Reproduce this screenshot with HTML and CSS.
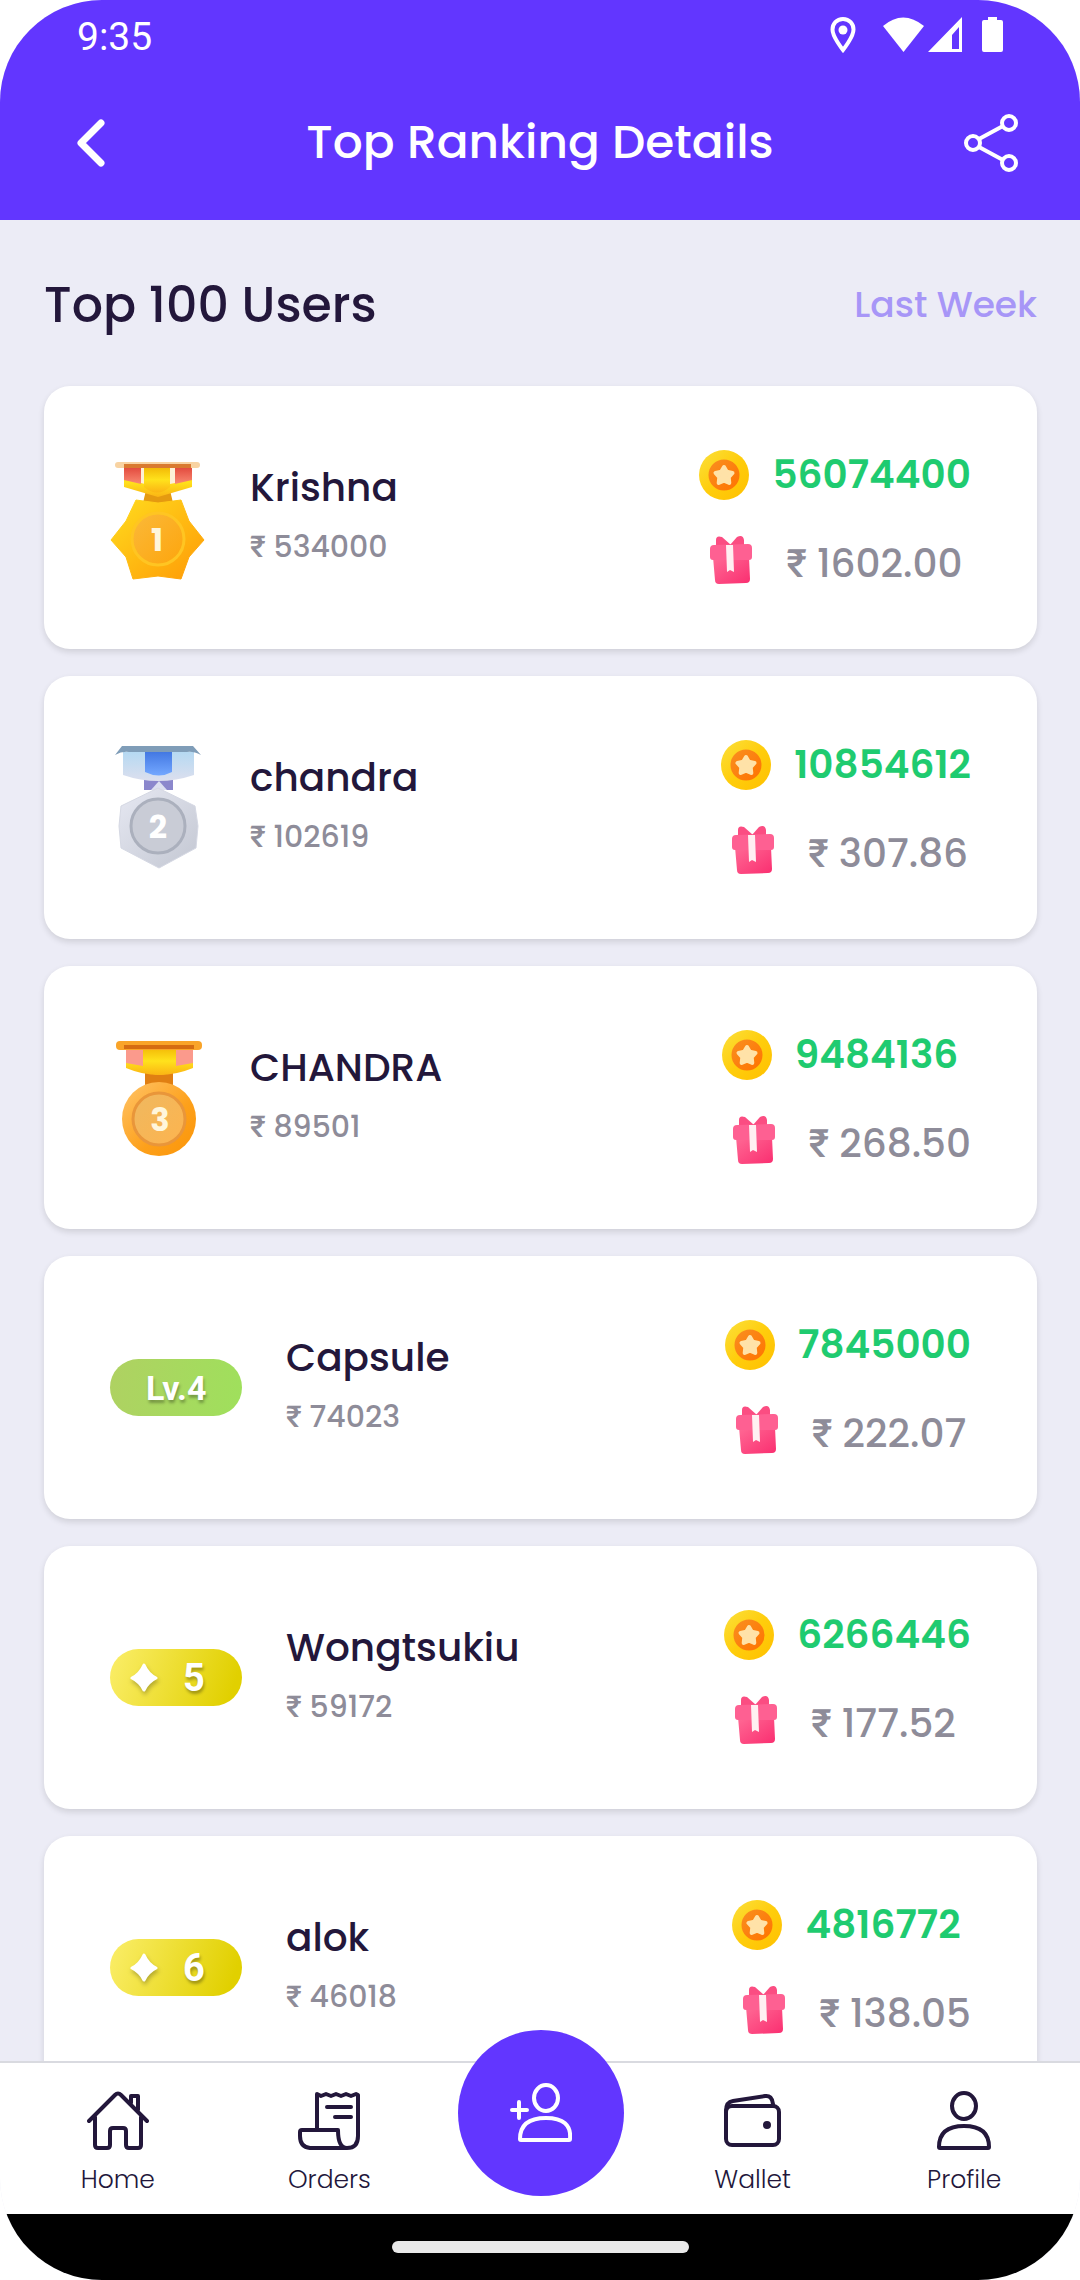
FILE: index.html
```html
<!DOCTYPE html>
<html lang="en">
<head>
<meta charset="utf-8">
<meta name="viewport" content="width=device-width, initial-scale=1">
<title>Top Ranking Details</title>
<link rel="stylesheet" href="styles.css">
</head>
<body>
<svg class="sprite" aria-hidden="true">
  <defs>
    <linearGradient id="gold" x1="0" y1="0" x2="1" y2="1"><stop offset="0" stop-color="#ffdc1e"/><stop offset="1" stop-color="#ff9a06"/></linearGradient>
    <linearGradient id="goldDisc" x1="0" y1="0" x2="1" y2="1"><stop offset="0" stop-color="#fbb93a"/><stop offset="1" stop-color="#fda50c"/></linearGradient>
    <linearGradient id="redRibbon" x1="0" y1="0" x2="0" y2="1"><stop offset="0" stop-color="#e2483c"/><stop offset="1" stop-color="#f98a72"/></linearGradient>
    <linearGradient id="yellowRibbon" x1="0" y1="0" x2="0" y2="1"><stop offset="0" stop-color="#f2b705"/><stop offset=".5" stop-color="#ffe21c"/><stop offset="1" stop-color="#fbb414"/></linearGradient>
    <linearGradient id="silver" x1="0" y1="0" x2="1" y2="1"><stop offset="0" stop-color="#e6e8f2"/><stop offset="1" stop-color="#c3c7d2"/></linearGradient>
    <linearGradient id="blueRibbon" x1="0" y1="0" x2="0" y2="1"><stop offset="0" stop-color="#3f74e0"/><stop offset="1" stop-color="#74a8ff"/></linearGradient>
    <linearGradient id="paleRibbon" x1="0" y1="0" x2="0" y2="1"><stop offset="0" stop-color="#b5d9f2"/><stop offset="1" stop-color="#dcdfee"/></linearGradient>
    <linearGradient id="bronze" x1="0" y1="0" x2="1" y2="1"><stop offset="0" stop-color="#ffc469"/><stop offset=".6" stop-color="#fda01a"/><stop offset="1" stop-color="#fb9508"/></linearGradient>
    <linearGradient id="bronzeDisc" x1="0" y1="0" x2="1" y2="1"><stop offset="0" stop-color="#efb860"/><stop offset="1" stop-color="#fdb44e"/></linearGradient>
    <linearGradient id="coinRim" x1="0" y1="0" x2="1" y2="1"><stop offset="0" stop-color="#fbe03c"/><stop offset=".5" stop-color="#ffcd0c"/><stop offset="1" stop-color="#ffc000"/></linearGradient>
    <linearGradient id="coinCore" x1="0" y1="0" x2="1" y2="1"><stop offset="0" stop-color="#f98f20"/><stop offset="1" stop-color="#ff7300"/></linearGradient>
    <linearGradient id="giftBox" x1="0" y1="0" x2="1" y2="1"><stop offset="0" stop-color="#ff6a95"/><stop offset="1" stop-color="#fa2e70"/></linearGradient>
  </defs>

  <symbol id="coin" viewBox="0 0 50 50">
    <circle cx="25" cy="25" r="25" fill="url(#coinRim)"/>
    <circle cx="25" cy="25" r="15.500" fill="url(#coinCore)"/>
    <path d="M25 17l2.800 4.800 5.700 1.200-3.800 4.300.6 5.700-5.300-2.300-5.300 2.300.6-5.700-3.800-4.300 5.700-1.200z" fill="#ffe2a8" stroke="#ffe2a8" stroke-width="4" stroke-linejoin="round"/>
  </symbol>

  <symbol id="gift" viewBox="0 0 64 64">
    <path d="M17 14V8q0-5 6-3l9 8h-1l7-8q6-3 7 3v6z" fill="#fb4d82"/>
    <path d="M14 25h36l1 22q0 4-4 4l-27 1q-4 0-4-4z" fill="url(#giftBox)"/>
    <path d="M11 17q0-4 4-4l34-1q4 0 4 4v9q0 3-3 3H14q-3 0-3-3z" fill="#fe6092"/>
    <path d="M27 13h7l1 27-4-2-3 2z" fill="#fff0f2"/>
  </symbol>

  <symbol id="sparkle" viewBox="0 0 30 30">
    <path d="M15 2q4 9 12 13-8 4-12 12Q11 19 3 15 11 11 15 2z" fill="#fff" stroke="#fff" stroke-width="3" stroke-linejoin="round"/>
  </symbol>
</svg>

<div class="screen">
  <div class="status-bar">
    <span class="clock">9:35</span>
    <svg class="status-icons" viewBox="0 0 174 36" aria-hidden="true">
      <path d="M14 2C7.500 2 3.500 7 3.500 12.500 3.500 20 14 33 14 33s10.500-13 10.500-20.500C24.500 7 20.500 2 14 2z" fill="none" stroke="#fff" stroke-width="4"/>
      <circle cx="14" cy="13" r="4.500" fill="#fff"/>
      <path d="M54 9q20-17 41 0L74.500 35z" fill="#fff"/>
      <path d="M133 0v35H99zM130 10l-7 8v14h7z" fill="#fff" fill-rule="evenodd"/>
      <path d="M159 0h9v3h4q2 0 2 2v28q0 2-2 2h-17q-2 0-2-2V5q0-2 2-2h4z" fill="#fff"/>
    </svg>
  </div>

  <header class="toolbar">
    <button class="tool-button" type="button" aria-label="Back">
      <svg class="tool-icon" viewBox="0 0 60 60" aria-hidden="true"><path d="M41 11L21 31l20 20" fill="none" stroke="#fff" stroke-width="7" stroke-linecap="round" stroke-linejoin="round"/></svg>
    </button>
    <h1 class="page-title">Top Ranking Details</h1>
    <button class="tool-button" type="button" aria-label="Share">
      <svg class="tool-icon" viewBox="0 0 60 60" aria-hidden="true"><g fill="none" stroke="#fff" stroke-width="4"><circle cx="13" cy="31" r="7"/><circle cx="49" cy="11" r="7"/><circle cx="49" cy="51" r="7"/><path d="M19 27l24-13M19 35l24 13"/></g></svg>
    </button>
  </header>

  <main class="content">
    <div class="section-head">
      <h2 class="section-title">Top 100 Users</h2>
      <a class="period" href="#">Last Week</a>
    </div>

    <ol class="ranking">
      <li class="card">
        <svg class="medal" viewBox="0 0 96 132" role="img" aria-label="Rank 1">
          <path d="M36 38h24l3 13H33z" fill="#e59a10"/>
          <path d="M14 15h68v20L48 45 14 35z" fill="url(#yellowRibbon)"/>
          <path d="M14 15h17v17l-17-4zM65 15h17v13l-17 4z" fill="url(#redRibbon)"/>
          <path d="M31 15h4v17l-4-1zM60 15h5v16l-5 1z" fill="#fdf0d8"/>
          <path d="M34 15h26v20q-13 11-26 0z" fill="url(#yellowRibbon)"/>
          <rect x="5" y="10" width="85" height="6" rx="3" fill="#f8d3a2"/>
          <rect x="14" y="12" width="67" height="4" fill="#d97a30"/>
          <path d="M26 48l22 3 23-3 8 21 15 19-15 17-8 22-23-3-25 3-7-22L1 88l15-19z" fill="url(#gold)" stroke="url(#gold)" stroke-width="1" stroke-linejoin="round"/>
          <circle cx="48" cy="87" r="26" fill="url(#goldDisc)" stroke="#ffc522" stroke-width="3"/>
          <text x="47" y="99" class="medal-number">1</text>
        </svg>
        <div class="user"><span class="name">Krishna</span><span class="amount"><span class="rupee">₹</span> 534000</span></div>
        <div class="rewards">
          <div class="reward"><svg class="coin" aria-hidden="true"><use href="#coin"/></svg><span class="points">56074400</span></div>
          <div class="reward"><svg class="gift" aria-hidden="true"><use href="#gift"/></svg><span class="prize"><span class="rupee">₹</span> 1602.00</span></div>
        </div>
      </li>
      <li class="card">
        <svg class="medal" viewBox="0 0 96 132" role="img" aria-label="Rank 2">
          <path d="M34 34h29v14H34z" fill="#8b87cc"/>
          <path d="M41 48l8-9 8 9z" fill="#dcdff0"/>
          <path d="M13 10h71v23q-36 12-71 0z" fill="url(#paleRibbon)"/>
          <path d="M35 8h27v22q-13 7-27 0z" fill="url(#blueRibbon)"/>
          <path d="M12 4h71l8 9q-8-4-14-3H19q-7-1-14 3z" fill="#7f9db8"/>
          <path d="M48 46l37 18 3 20-2 22-37 20-38-20-2-22 2-20z" fill="url(#silver)" stroke="#d5d8e3" stroke-width="1" stroke-linejoin="round"/>
          <circle cx="48" cy="84" r="27" fill="#c9ccd6" stroke="#abb0bd" stroke-width="3"/>
          <text x="48" y="96" class="medal-number medal-number-silver">2</text>
        </svg>
        <div class="user"><span class="name">chandra</span><span class="amount"><span class="rupee">₹</span> 102619</span></div>
        <div class="rewards">
          <div class="reward"><svg class="coin" aria-hidden="true"><use href="#coin"/></svg><span class="points">10854612</span></div>
          <div class="reward"><svg class="gift" aria-hidden="true"><use href="#gift"/></svg><span class="prize"><span class="rupee">₹</span> 307.86</span></div>
        </div>
      </li>
      <li class="card">
        <svg class="medal" viewBox="0 0 96 132" role="img" aria-label="Rank 3">
          <path d="M35 39h28v14H35z" fill="#e07f12"/>
          <path d="M16 14h67v22q-34 14-67 0z" fill="url(#yellowRibbon)"/>
          <path d="M16 15h17v19l-17-3zM66 15h17v16l-17 3z" fill="#fb9a8c"/>
          <path d="M33 15h33v22q-17 12-33 0z" fill="url(#yellowRibbon)"/>
          <rect x="6" y="9" width="86" height="9" rx="4" fill="#f9a429"/>
          <rect x="14" y="13" width="70" height="4" fill="#d56c12"/>
          <circle cx="49" cy="87" r="37" fill="url(#bronze)"/>
          <circle cx="49" cy="87" r="26" fill="url(#bronzeDisc)" stroke="#e9963a" stroke-width="3"/>
          <text x="50" y="99" class="medal-number">3</text>
        </svg>
        <div class="user"><span class="name">CHANDRA</span><span class="amount"><span class="rupee">₹</span> 89501</span></div>
        <div class="rewards">
          <div class="reward"><svg class="coin" aria-hidden="true"><use href="#coin"/></svg><span class="points">9484136</span></div>
          <div class="reward"><svg class="gift" aria-hidden="true"><use href="#gift"/></svg><span class="prize"><span class="rupee">₹</span> 268.50</span></div>
        </div>
      </li>
      <li class="card">
        <span class="level level-green">Lv.4</span>
        <div class="user"><span class="name">Capsule</span><span class="amount"><span class="rupee">₹</span> 74023</span></div>
        <div class="rewards">
          <div class="reward"><svg class="coin" aria-hidden="true"><use href="#coin"/></svg><span class="points">7845000</span></div>
          <div class="reward"><svg class="gift" aria-hidden="true"><use href="#gift"/></svg><span class="prize"><span class="rupee">₹</span> 222.07</span></div>
        </div>
      </li>
      <li class="card">
        <span class="level level-yellow"><svg class="sparkle" aria-hidden="true"><use href="#sparkle"/></svg>5</span>
        <div class="user"><span class="name">Wongtsukiu</span><span class="amount"><span class="rupee">₹</span> 59172</span></div>
        <div class="rewards">
          <div class="reward"><svg class="coin" aria-hidden="true"><use href="#coin"/></svg><span class="points">6266446</span></div>
          <div class="reward"><svg class="gift" aria-hidden="true"><use href="#gift"/></svg><span class="prize"><span class="rupee">₹</span> 177.52</span></div>
        </div>
      </li>
      <li class="card">
        <span class="level level-yellow"><svg class="sparkle" aria-hidden="true"><use href="#sparkle"/></svg>6</span>
        <div class="user"><span class="name">alok</span><span class="amount"><span class="rupee">₹</span> 46018</span></div>
        <div class="rewards">
          <div class="reward"><svg class="coin" aria-hidden="true"><use href="#coin"/></svg><span class="points">4816772</span></div>
          <div class="reward"><svg class="gift" aria-hidden="true"><use href="#gift"/></svg><span class="prize"><span class="rupee">₹</span> 138.05</span></div>
        </div>
      </li>
    </ol>
  </main>

  <nav class="tab-bar" aria-label="Main">
    <a class="tab" href="#">
      <svg class="tab-icon" viewBox="0 0 62 62" aria-hidden="true"><path d="M2 31L28 5q3-3 6 0l26 26M8 27v28q0 3 3 3h9q3 0 3-3V41q0-3 3-3h10q3 0 3 3v14q0 3 3 3h9q3 0 3-3V27M44 13V6h7v14"/></svg>
      <span>Home</span>
    </a>
    <a class="tab" href="#">
      <svg class="tab-icon" viewBox="0 0 62 62" aria-hidden="true"><path d="M19 40V4l4 2 5-2 5 2 5-2 5 2 5-2 5 2 5-2 2 1v41q0 12-11 12H12Q2 57 2 46v-4q0-2 2-2h36q0 18 9 18M29 17h24M37 27h16"/></svg>
      <span>Orders</span>
    </a>
    <div class="tab-center">
      <button class="invite" type="button" aria-label="Invite friends">
        <svg class="invite-icon" viewBox="0 0 62 62" aria-hidden="true"><ellipse cx="36" cy="16" rx="12" ry="13"/><path d="M10 57q0-21 26-21t24 21q0 1-1 1H11q-1 0-1-1zM2 28h15M9 20v16"/></svg>
      </button>
    </div>
    <a class="tab" href="#">
      <svg class="tab-icon" viewBox="0 0 62 62" aria-hidden="true"><rect x="4" y="16" width="53" height="39" rx="6"/><path d="M4 21q0-9 7-10l32-5q7-1 8 8v2"/><circle cx="45" cy="35" r="2"/></svg>
      <span>Wallet</span>
    </a>
    <a class="tab" href="#">
      <svg class="tab-icon" viewBox="0 0 62 62" aria-hidden="true"><ellipse cx="31" cy="16" rx="12" ry="13"/><path d="M6 57q0-21 25-21t25 21q0 1-1 1H7q-1 0-1-1z"/></svg>
      <span>Profile</span>
    </a>
  </nav>

  <div class="gesture-bar"><span class="gesture-handle"></span></div>
</div>
</body>
</html>
```
FILE: styles.css
```css
* {
  box-sizing: border-box;
}

body {
  margin: 0;
  background: #fff;
  color: #23173b;
  font-family: Poppins, Inter, "Noto Sans", sans-serif;
}

.sprite {
  position: absolute;
  width: 0;
  height: 0;
}

.screen {
  display: flex;
  flex-direction: column;
  height: 100vh;
  border-radius: 102px;
  overflow: hidden;
  background: #ececf6;
}

/* Status bar and toolbar */

.status-bar {
  display: flex;
  flex: none;
  align-items: center;
  justify-content: space-between;
  height: 72px;
  padding: 2px 77px 0;
  background: #6236ff;
  color: #fff;
}

.clock {
  font: 400 39px/48px Roboto, sans-serif;
}

.status-icons {
  width: 174px;
  height: 36px;
  margin-bottom: 4px;
}

.toolbar {
  display: flex;
  flex: none;
  align-items: center;
  justify-content: space-between;
  height: 148px;
  padding: 0 60px 8px;
  background: #6236ff;
  color: #fff;
}

.tool-button {
  display: flex;
  padding: 0;
  border: 0;
  background: none;
}

.tool-icon {
  width: 60px;
  height: 60px;
}

.page-title {
  margin: 0;
  font-size: 47px;
  line-height: 64px;
  font-weight: 500;
}

/* Ranking list */

.content {
  flex: 1;
  min-height: 0;
  padding: 0 43px 0 44px;
  overflow: hidden;
}

.section-head {
  display: flex;
  align-items: center;
  justify-content: space-between;
  height: 166px;
  padding-top: 4px;
}

.section-title {
  margin: 0;
  font-size: 49px;
  line-height: 64px;
  font-weight: 500;
}

.period {
  color: #a796f7;
  font-size: 36px;
  line-height: 64px;
  font-weight: 500;
  text-decoration: none;
}

.ranking {
  display: flex;
  flex-direction: column;
  gap: 27px;
  margin: 0;
  padding: 0;
  list-style: none;
}

.card {
  display: flex;
  align-items: center;
  gap: 44px;
  height: 263px;
  padding: 0 66px;
  border-radius: 26px;
  background: #fff;
  box-shadow: 0 3px 6px rgba(0, 0, 0, 0.12);
}

.medal {
  flex: none;
  width: 96px;
  height: 132px;
}

.medal-number {
  fill: #fff6dc;
  font-size: 32px;
  font-weight: 700;
  text-anchor: middle;
}

.medal-number-silver {
  fill: #fff;
}

.level {
  display: flex;
  flex: none;
  align-items: center;
  width: 132px;
  height: 57px;
  border-radius: 29px;
  color: #fff;
  font-family: Roboto, sans-serif;
  font-weight: 700;
  text-shadow: 1px 3px 3px rgba(0, 0, 0, 0.3);
}

.level-green {
  padding-left: 36px;
  background: linear-gradient(100deg, #afd162, #9fe05c);
  font-size: 34px;
}

.level-yellow {
  gap: 24px;
  padding-left: 19px;
  background: linear-gradient(110deg, #fbee6a, #e1d000 90%);
  font-size: 38px;
}

.sparkle {
  width: 30px;
  height: 30px;
  filter: drop-shadow(1px 3px 2px rgba(0, 0, 0, 0.25));
}

.user {
  display: flex;
  flex: 1;
  flex-direction: column;
}

.name {
  font-size: 39px;
  line-height: 58px;
  font-weight: 500;
}

.amount {
  color: #8e8c99;
  font-size: 30px;
  line-height: 60px;
  font-weight: 500;
}

.rupee {
  font-family: Roboto, sans-serif;
}

.rewards {
  display: flex;
  flex-direction: column;
  gap: 25px;
  padding-top: 4px;
}

.reward {
  display: flex;
  align-items: center;
  gap: 23px;
  line-height: 64px;
}

.coin {
  width: 50px;
  height: 50px;
}

.gift {
  width: 64px;
  height: 64px;
}

.points {
  color: #1fcb70;
  font-size: 39px;
  font-weight: 600;
}

.prize {
  color: #8e8c99;
  font-size: 39px;
  font-weight: 500;
}

/* Bottom navigation */

.tab-bar {
  display: grid;
  flex: none;
  grid-template-columns: repeat(5, 1fr);
  padding: 27px 10px 16px 12px;
  border-top: 2px solid #d9dae0;
  background: #fff;
}

.tab {
  display: flex;
  flex-direction: column;
  align-items: center;
  gap: 10px;
  color: inherit;
  font-size: 25px;
  line-height: 36px;
  font-weight: 300;
  text-decoration: none;
}

.tab-icon,
.invite-icon {
  width: 62px;
  height: 62px;
  fill: none;
  stroke: #23173b;
  stroke-width: 4;
  stroke-linecap: round;
  stroke-linejoin: round;
}

.invite-icon {
  stroke: #fff;
}

.tab-center {
  display: flex;
  justify-content: center;
  height: 108px;
}

.invite {
  display: flex;
  flex: none;
  align-items: center;
  justify-content: center;
  width: 166px;
  height: 166px;
  margin-top: -60px;
  padding: 0;
  border: 0;
  border-radius: 50%;
  background: #6236ff;
  z-index: 1;
}

.gesture-bar {
  display: flex;
  flex: none;
  align-items: center;
  justify-content: center;
  height: 66px;
  background: #000;
}

.gesture-handle {
  width: 297px;
  height: 12px;
  border-radius: 6px;
  background: #e9e9e9;
}
```
